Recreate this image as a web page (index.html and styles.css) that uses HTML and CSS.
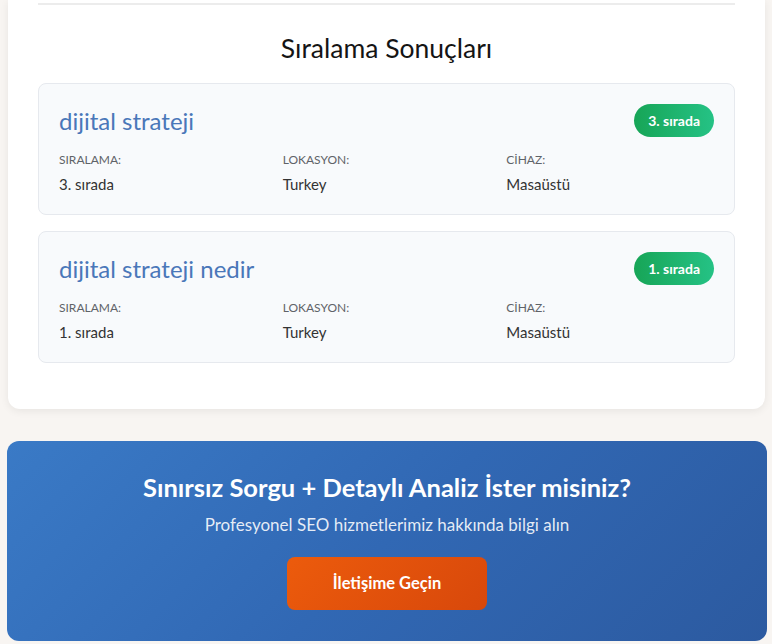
FILE: index.html
```html
<!DOCTYPE html>
<html lang="tr">
<head>
<meta charset="utf-8">
<link rel="stylesheet" href="styles.css">
</head>
<body>
<section class="panel">
  <div class="divider"></div>
  <h2 class="title">Sıralama Sonuçları</h2>
  <div class="card">
    <div class="card-head">
      <h3 class="keyword">dijital strateji</h3>
      <span class="badge">3. sırada</span>
    </div>
    <div class="meta">
      <div class="cell"><div class="label">SIRALAMA:</div><div class="value">3. sırada</div></div>
      <div class="cell"><div class="label">LOKASYON:</div><div class="value">Turkey</div></div>
      <div class="cell"><div class="label">CİHAZ:</div><div class="value">Masaüstü</div></div>
    </div>
  </div>
  <div class="card">
    <div class="card-head">
      <h3 class="keyword">dijital strateji nedir</h3>
      <span class="badge">1. sırada</span>
    </div>
    <div class="meta">
      <div class="cell"><div class="label">SIRALAMA:</div><div class="value">1. sırada</div></div>
      <div class="cell"><div class="label">LOKASYON:</div><div class="value">Turkey</div></div>
      <div class="cell"><div class="label">CİHAZ:</div><div class="value">Masaüstü</div></div>
    </div>
  </div>
</section>
<section class="cta">
  <h2 class="cta-title">Sınırsız Sorgu + Detaylı Analiz İster misiniz?</h2>
  <p class="cta-sub">Profesyonel SEO hizmetlerimiz hakkında bilgi alın</p>
  <a class="cta-btn" href="#">İletişime Geçin</a>
</section>
</body>
</html>
```
FILE: styles.css
```css
* { box-sizing: border-box; }
html, body { margin: 0; padding: 0; }
body {
  background: #f8f5f2;
  font-family: "Lato", "Noto Sans", sans-serif;
  padding: 0 7px 0 8px;
  overflow: hidden;
  height: 644px;
}
.panel {
  background: #ffffff;
  border-radius: 0 0 12px 12px;
  box-shadow: 0 2px 8px rgba(0,0,0,0.07);
  padding: 3px 30px 30px;
}
.divider {
  height: 2px;
  background: #ececec;
}
.title {
  margin: 0;
  padding: 27px 0 19px;
  text-align: center;
  font-size: 26.5px;
  line-height: 32px;
  font-weight: 400;
  color: #141414;
}
.card {
  background: #f8fafc;
  border: 1px solid #e6e9ee;
  border-radius: 8px;
  padding: 20px;
  margin-bottom: 16px;
}
.card-head {
  display: flex;
  justify-content: space-between;
  align-items: center;
  height: 33px;
}
.keyword {
  margin: 0;
  font-size: 24px;
  font-weight: 400;
  color: #4a77b9;
  line-height: 30px;
}
.badge {
  display: inline-block;
  background: linear-gradient(90deg, #17a557, #25c285);
  color: #fff;
  font-weight: 700;
  font-size: 14px;
  line-height: 33px;
  height: 33px;
  padding: 0 14px;
  border-radius: 17px;
}
.meta {
  display: grid;
  grid-template-columns: repeat(3, 1fr);
  gap: 16px;
  margin-top: 14px;
}
.label {
  font-size: 12px;
  line-height: 18px;
  color: #5f6368;
}
.value {
  margin-top: 5px;
  font-size: 15px;
  line-height: 20px;
  color: #333;
}
.cta {
  margin: 32px -2px 0 -1px;
  background: linear-gradient(135deg, #3a7ac6 0%, #3168b4 50%, #2c5aa0 100%);
  border-radius: 12px;
  padding: 29px 20px 31px;
  text-align: center;
  color: #fff;
}
.cta-title {
  margin: 0;
  font-size: 25.5px;
  line-height: 34px;
  font-weight: 700;
}
.cta-sub {
  margin: 10px 0 21px;
  font-size: 17px;
  line-height: 22px;
  color: rgba(255,255,255,0.88);
}
.cta-btn {
  display: inline-block;
  width: 200px;
  height: 53px;
  line-height: 53px;
  border-radius: 8px;
  background: linear-gradient(135deg, #ec5b0c, #d8480b);
  color: #fff;
  font-weight: 700;
  font-size: 16.5px;
  text-decoration: none;
}
```
